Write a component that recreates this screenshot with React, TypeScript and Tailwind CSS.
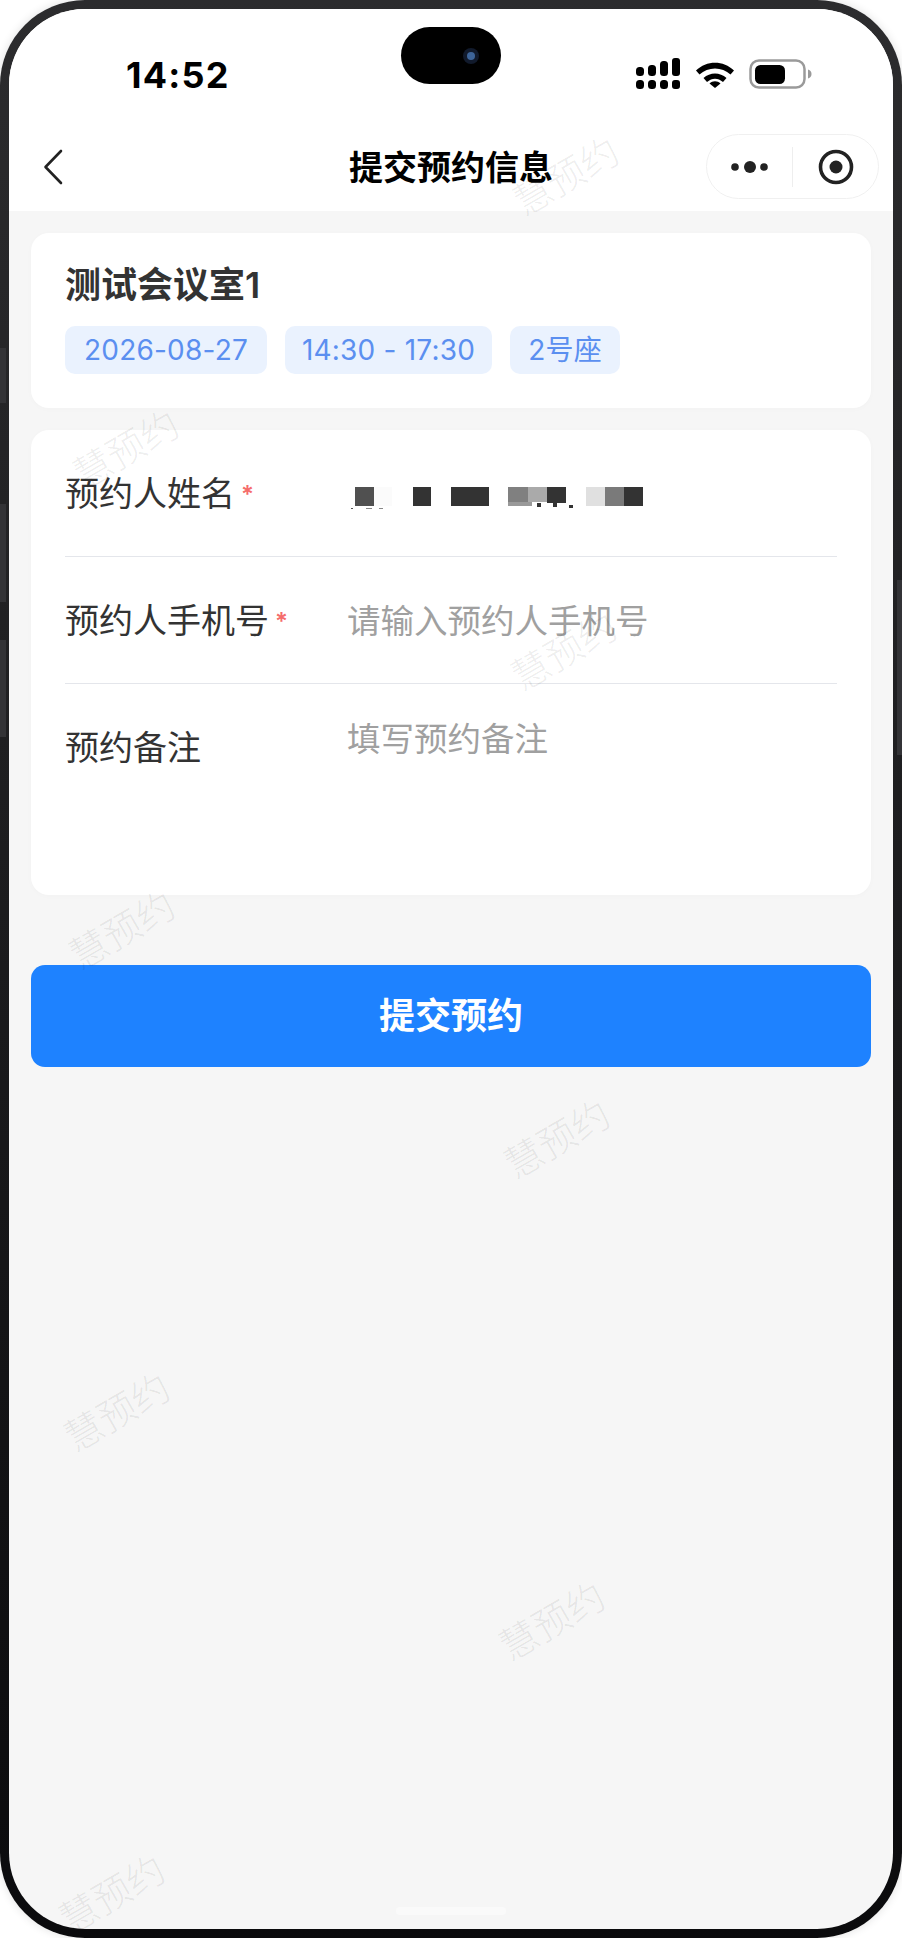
const FONT = "font-['Inter','Noto_Sans_CJK_SC',sans-serif]"

const WATERMARKS = [
  'left-[557px] top-[167px]',
  'left-[117px] top-[440px]',
  'left-[555px] top-[642px]',
  'left-[113px] top-[921px]',
  'left-[548px] top-[1130px]',
  'left-[108px] top-[1403px]',
  'left-[543px] top-[1612px]',
  'left-[103px] top-[1885px]',
]

function StatusIcons() {
  return (
    <div className="flex items-center">
      <svg width="44" height="31" viewBox="0 0 44 31" className="block">
        <rect x="0" y="9" width="8" height="9" rx="3.5" fill="#000" />
        <rect x="12" y="7" width="8" height="11" rx="3.5" fill="#000" />
        <rect x="24" y="3" width="8" height="15" rx="3.5" fill="#000" />
        <rect x="36" y="0" width="8" height="18" rx="3" fill="#000" />
        <rect x="0" y="22" width="8" height="9" rx="3.5" fill="#000" />
        <rect x="12" y="22" width="8" height="9" rx="3.5" fill="#000" />
        <rect x="24" y="22" width="8" height="9" rx="3.5" fill="#000" />
        <rect x="36" y="22" width="8" height="9" rx="3" fill="#000" />
      </svg>
      <svg width="40" height="28" viewBox="0 0 40 28" className="ml-[15px] block">
        <path d="M1 10.5C11.5 0 28.5 0 39 10.5L35.5 14.5C27 6.5 13 6.5 4.5 14.5Z" fill="#000" />
        <path d="M8.5 18C15 12 25 12 31.5 18L28 22C23 17.5 17 17.5 12 22Z" fill="#000" />
        <path d="M14.5 23.5C17.5 20.5 22.5 20.5 25.5 23.5L20 28Z" fill="#000" />
      </svg>
      <svg width="63" height="30" viewBox="0 0 63 30" className="ml-[14px] block">
        <rect x="1.5" y="1.5" width="54" height="27" rx="8.5" fill="none" stroke="#9a9a9a" strokeWidth="2.5" />
        <rect x="6" y="6" width="30" height="19" rx="5.5" fill="#000" />
        <path d="M59 10.5C61.5 11 62.5 13 62.5 15S61.5 19 59 19.5Z" fill="#9a9a9a" />
      </svg>
    </div>
  )
}

function NameMosaic() {
  // pixelated name, kept as the blocks shown in the picture
  return (
    <svg width="300" height="30" viewBox="0 0 300 30" className="mt-[6px] block translate-x-[1px]">
      <rect x="7" y="5" width="19" height="19" fill="#505050" />
      <rect x="26" y="5" width="18" height="19" fill="#fbfbfb" />
      <rect x="65" y="5" width="18" height="19" fill="#333" />
      <rect x="103" y="5" width="38" height="19" fill="#333" />
      <rect x="160" y="5" width="20" height="15" fill="#808080" />
      <rect x="180" y="5" width="19" height="15" fill="#aaa" />
      <rect x="199" y="5" width="19" height="16" fill="#333" />
      <rect x="160" y="20" width="24" height="4" fill="#999" />
      <rect x="189" y="21" width="4" height="4" fill="#333" />
      <rect x="205" y="21" width="4" height="4" fill="#333" />
      <rect x="238" y="5" width="19" height="19" fill="#e0e0e0" />
      <rect x="257" y="5" width="19" height="19" fill="#7a7a7a" />
      <rect x="276" y="5" width="19" height="19" fill="#333" />
      <rect x="221" y="23" width="4" height="3" fill="#333" />
      <rect x="3" y="26" width="2" height="1" fill="#555" />
      <rect x="18" y="26" width="6" height="1" fill="#888" />
      <rect x="31" y="26" width="4" height="1" fill="#888" />
    </svg>
  )
}

function Tag({ text, width }: { text: string; width: string }) {
  return (
    <span className={`flex h-[48px] items-center justify-center rounded-[10px] bg-[#eaf2fe] text-[28px] leading-none tracking-[0.2px] text-[#5b8ff0] ${width}`}>
      {text}
    </span>
  )
}

function Required() {
  return <span className="ml-[6px] translate-y-[1px] text-[24px] font-semibold leading-none text-[#f56c6c]">*</span>
}

export default function App() {
  return (
    <div className={`${FONT} relative h-[1938px] w-[902px] bg-white`}>
      <div className="absolute left-0 top-[348px] z-10 h-[55px] w-[6px] bg-[#333336]" />
      <div className="absolute left-0 top-[504px] z-10 h-[98px] w-[6px] bg-[#333336]" />
      <div className="absolute left-0 top-[640px] z-10 h-[97px] w-[6px] bg-[#333336]" />
      <div className="absolute right-0 top-[580px] z-10 h-[175px] w-[5px] bg-[#333336]" />

      <div className="h-full rounded-[85px] bg-gradient-to-b from-[#2c2c2e] via-[#1b1b1d] to-[#0b0b0d] p-[9px] shadow-[0_0_10px_rgba(0,0,0,0.12)]">
        <div className="relative flex h-full flex-col overflow-hidden rounded-[76px] bg-[#f6f6f6]">
          <header className="relative h-[202px] shrink-0 bg-white">
            <div className="flex h-[125px] items-start justify-between pl-[117px] pr-[81px]">
              <span className="mt-[46px] text-[36px] font-bold leading-[40px] tracking-[1.2px] text-black">14:52</span>
              <div className="mt-[49px]">
                <StatusIcons />
              </div>
            </div>

            <div className="absolute left-[392px] top-[18px] flex h-[57px] w-[100px] items-center justify-end rounded-full bg-black pr-[22px]">
              <span className="flex h-[16px] w-[16px] items-center justify-center rounded-full bg-[#111a2c]">
                <span className="h-[8px] w-[8px] rounded-full bg-[#3d6499]" />
              </span>
            </div>

            <div className="relative flex h-[64px] items-center justify-center">
              <svg width="20" height="36" viewBox="0 0 20 36" fill="none" className="absolute left-[34px] top-[15px]">
                <path d="M18 2L2.5 18L18 34" stroke="#222" strokeWidth="2.6" strokeLinecap="round" strokeLinejoin="round" />
              </svg>
              <h1 className="translate-y-[2px] text-[34px] font-bold leading-none text-black">提交预约信息</h1>
              <div className="absolute right-[14px] top-0 flex h-[65px] w-[173px] items-center rounded-full border border-[#f0f0f0] bg-white">
                <div className="flex w-[85px] items-center justify-center">
                  <svg width="38" height="14" viewBox="0 0 38 14">
                    <circle cx="4" cy="7" r="3.8" fill="#222" />
                    <circle cx="19" cy="7" r="6" fill="#222" />
                    <circle cx="33" cy="7" r="3.8" fill="#222" />
                  </svg>
                </div>
                <div className="h-[40px] w-px bg-[#eeeeee]" />
                <div className="flex flex-1 items-center justify-center">
                  <svg width="36" height="36" viewBox="0 0 36 36">
                    <circle cx="18" cy="18" r="15.5" fill="none" stroke="#222" strokeWidth="3.6" />
                    <circle cx="18" cy="18" r="6.5" fill="#222" />
                  </svg>
                </div>
              </div>
            </div>
          </header>

          <main className="flex flex-col px-[22px] pt-[22px]">
            <section className="h-[175px] rounded-[18px] bg-white px-[34px] pt-[30px] shadow-[0_1px_6px_rgba(0,0,0,0.02)]">
              <h2 className="text-[36px] font-semibold leading-[44px] text-[#333]">测试会议室1</h2>
              <div className="mt-[19px] flex gap-[18px]">
                <Tag text="2026-08-27" width="w-[202px]" />
                <Tag text="14:30 - 17:30" width="w-[207px]" />
                <Tag text="2号座" width="w-[110px]" />
              </div>
            </section>

            <section className="mt-[22px] h-[465px] rounded-[18px] bg-white px-[34px] shadow-[0_1px_6px_rgba(0,0,0,0.02)]">
              <div className="flex h-[127px] items-center border-b border-[#e4e6eb] pt-[2px]">
                <label className="flex w-[282px] items-center text-[34px] leading-[44px] text-[#333]">
                  预约人姓名
                  <Required />
                </label>
                <NameMosaic />
              </div>
              <div className="flex h-[127px] items-center border-b border-[#e4e6eb] pt-[2px]">
                <label className="flex w-[282px] items-center text-[34px] leading-[44px] text-[#333]">
                  预约人手机号
                  <Required />
                </label>
                <input
                  placeholder="请输入预约人手机号"
                  className="min-w-0 flex-1 bg-transparent text-[33.5px] leading-[44px] text-[#333] outline-none placeholder:text-[#a0a0a0]"
                />
              </div>
              <div className="flex pt-[42px]">
                <label className="w-[282px] text-[34px] leading-[44px] text-[#333]">预约备注</label>
                <textarea
                  placeholder="填写预约备注"
                  className="-mt-[9px] h-[130px] min-w-0 flex-1 resize-none bg-transparent text-[33.5px] leading-[44px] text-[#333] outline-none placeholder:text-[#a0a0a0]"
                />
              </div>
            </section>

            <button
              type="button"
              className="mt-[70px] h-[102px] rounded-[14px] bg-[#1e82ff] text-[36px] font-semibold text-white"
            >
              提交预约
            </button>
          </main>

          <div className="absolute bottom-[14px] left-[387px] h-[8px] w-[110px] rounded-full bg-[#fafafa]" />

          {WATERMARKS.map((pos) => (
            <span
              key={pos}
              className={`pointer-events-none absolute z-10 -translate-x-1/2 -translate-y-1/2 -rotate-30 whitespace-nowrap text-[38px] font-light leading-none text-black/8 ${pos}`}
            >
              慧预约
            </span>
          ))}
        </div>
      </div>
    </div>
  )
}
